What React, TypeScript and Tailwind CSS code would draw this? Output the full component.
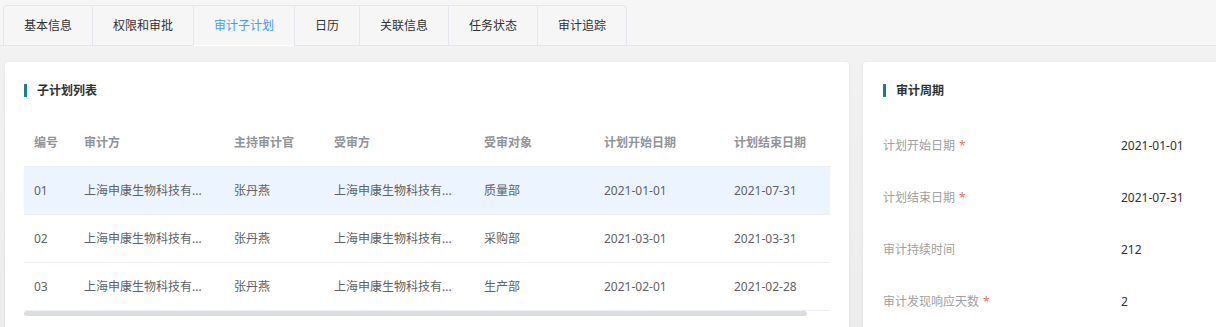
import React from "react";

const tabs = ["基本信息", "权限和审批", "审计子计划", "日历", "关联信息", "任务状态", "审计追踪"];

const cols = [
  { key: "no", title: "编号", w: "w-[50px]" },
  { key: "auditor", title: "审计方", w: "w-[150px]" },
  { key: "lead", title: "主持审计官", w: "w-[100px]" },
  { key: "auditee", title: "受审方", w: "w-[150px]" },
  { key: "obj", title: "受审对象", w: "w-[120px]" },
  { key: "start", title: "计划开始日期", w: "w-[130px]" },
  { key: "end", title: "计划结束日期", w: "w-[130px]" },
];

const company = "上海申康生物科技有...";

const rows = [
  { no: "01", auditor: company, lead: "张丹燕", auditee: company, obj: "质量部", start: "2021-01-01", end: "2021-07-31" },
  { no: "02", auditor: company, lead: "张丹燕", auditee: company, obj: "采购部", start: "2021-03-01", end: "2021-03-31" },
  { no: "03", auditor: company, lead: "张丹燕", auditee: company, obj: "生产部", start: "2021-02-01", end: "2021-02-28" },
];

const fields = [
  { label: "计划开始日期", req: true, value: "2021-01-01" },
  { label: "计划结束日期", req: true, value: "2021-07-31" },
  { label: "审计持续时间", req: false, value: "212" },
  { label: "审计发现响应天数", req: true, value: "2" },
];

function Title({ text }: { text: string }) {
  return (
    <div className="flex items-center h-[13px]">
      <div className="w-[3px] h-[13px] bg-[#12838f]" />
      <div className="ml-[10px] text-[12px] leading-[16px] font-bold text-[#303133]">{text}</div>
    </div>
  );
}

export default function App() {
  return (
    <div
      className="w-[1216px] h-[327px] overflow-hidden bg-[#ededed] text-[12px]"
      style={{ fontFamily: '"Noto Sans", "Noto Sans CJK SC", sans-serif' }}
    >
      {/* Tabs header */}
      <div className="bg-[#f6f6f7] pt-[5px] pl-[3px] border-b border-[#e4e7ed]">
        <div className="flex w-fit -mb-px border-t border-l border-r border-[#e4e7ed] rounded-t-[4px]">
          {tabs.map((t, i) => {
            const active = i === 2;
            return (
              <div
                key={t}
                className={
                  "h-[40px] px-[20px] flex items-center border-b text-[12px] leading-[16px] " +
                  (i > 0 ? "border-l border-l-[#e4e7ed] " : "") +
                  (active ? "border-b-white text-[#409eff]" : "border-b-[#e4e7ed] text-[#303133]")
                }
              >
                {t}
              </div>
            );
          })}
        </div>
      </div>

      {/* Content */}
      <div className="flex gap-[14px] pt-[16px] pl-[5px] bg-gradient-to-b from-[#f2f2f2] to-[#ececec]">
        {/* Left card */}
        <div className="w-[844px] h-[300px] shrink-0 bg-white rounded-[4px] shadow-[0_1px_4px_rgba(0,0,0,0.06)] px-[19px] pt-[22px]">
          <Title text="子计划列表" />
          <div className="mt-[22px] w-[806px] overflow-hidden">
            <div className="w-[830px]">
              <div className="flex h-[48px] border-b border-[#ebeef5] items-center">
                {cols.map((c) => (
                  <div key={c.key} className={c.w + " shrink-0 px-[10px] text-[#909399] font-semibold leading-[16px] whitespace-nowrap"}>
                    {c.title}
                  </div>
                ))}
              </div>
              {rows.map((r, ri) => (
                <div
                  key={r.no}
                  className={"flex h-[48px] border-b border-[#ebeef5] items-center " + (ri === 0 ? "bg-[#ecf5ff]" : "bg-white")}
                >
                  {cols.map((c) => (
                    <div
                      key={c.key}
                      className={c.w + " shrink-0 px-[10px] text-[#606266] leading-[16px] whitespace-nowrap"}
                    >
                      {(r as Record<string, string>)[c.key]}
                    </div>
                  ))}
                </div>
              ))}
            </div>
            <div className="h-[6px]">
              <div className="w-[783px] h-[5px] rounded-[3px] bg-[#dcdde0]" />
            </div>
          </div>
        </div>

        {/* Right card */}
        <div className="w-[400px] h-[300px] shrink-0 bg-white rounded-[4px] shadow-[0_1px_4px_rgba(0,0,0,0.06)] pl-[20px] pt-[22px]">
          <Title text="审计周期" />
          <div className="mt-[23px]">
            {fields.map((f) => (
              <div key={f.label} className="flex h-[52px] items-center">
                <div className="w-[238px] shrink-0 text-[#a0a0a0] leading-[16px]">
                  {f.label}
                  {f.req && <span className="text-[#f56c6c] ml-[4px]">*</span>}
                </div>
                <div className="text-[#303133] leading-[16px]">{f.value}</div>
              </div>
            ))}
          </div>
        </div>
      </div>
    </div>
  );
}
